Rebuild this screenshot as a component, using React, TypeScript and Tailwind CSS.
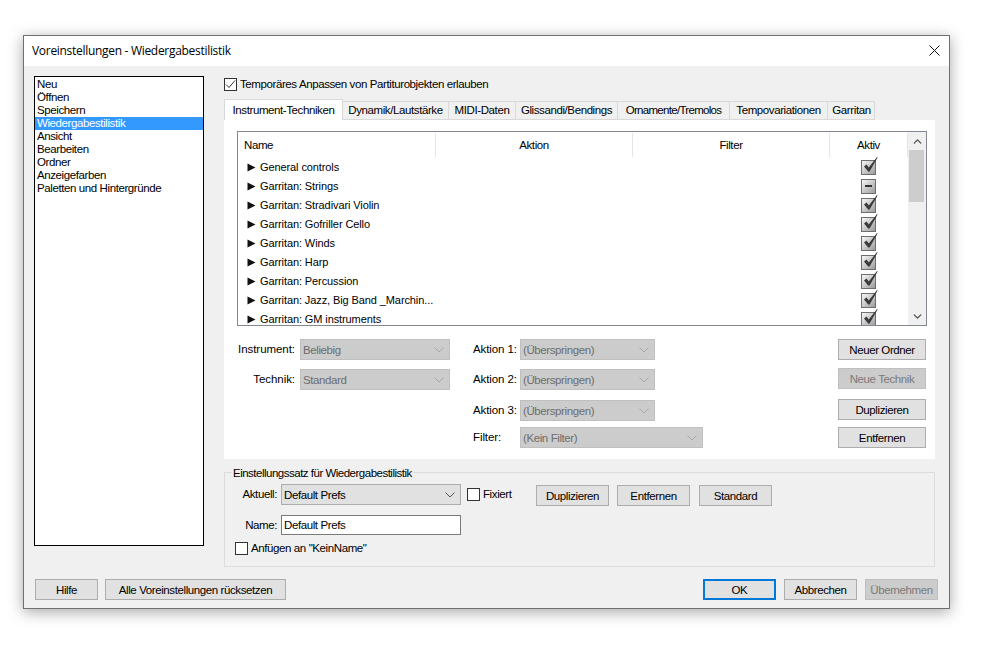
import { ChevronDown, ChevronUp } from 'lucide-react';

const menuItems = ['Neu', 'Öffnen', 'Speichern', 'Wiedergabestilistik', 'Ansicht', 'Bearbeiten', 'Ordner', 'Anzeigefarben', 'Paletten und Hintergründe'];

const tabs = [
  { label: 'Dynamik/Lautstärke', width: 'w-[106px]' },
  { label: 'MIDI-Daten', width: 'w-[67px]' },
  { label: 'Glissandi/Bendings', width: 'w-[102px]' },
  { label: 'Ornamente/Tremolos', width: 'w-[112px] tracking-[-0.7px]' },
  { label: 'Tempovariationen', width: 'w-[98px]' },
  { label: 'Garritan', width: 'w-[47px] pl-[1px]' },
];

const rows = [
  { name: 'General controls', state: 'on' },
  { name: 'Garritan: Strings', state: 'mixed' },
  { name: 'Garritan: Stradivari Violin', state: 'on' },
  { name: 'Garritan: Gofriller Cello', state: 'on' },
  { name: 'Garritan: Winds', state: 'on' },
  { name: 'Garritan: Harp', state: 'on' },
  { name: 'Garritan: Percussion', state: 'on' },
  { name: 'Garritan: Jazz, Big Band _Marchin...', state: 'on' },
  { name: 'Garritan: GM instruments', state: 'on' },
];

function Button({ label, width = 'w-[88px]', disabled, primary }: { label: string; width?: string; disabled?: boolean; primary?: boolean }) {
  const tone = disabled
    ? 'bg-[#cccccc] border-[#bfbfbf] text-[#7a7a7a]'
    : primary
      ? 'bg-[#e1e1e1] border-2 border-[#0078d7] text-black'
      : 'bg-[#e1e1e1] border-[#adadad] text-black';
  return <div className={`h-[21px] shrink-0 border pt-[1px] flex items-center justify-center ${width} ${tone}`}>{label}</div>;
}

function Select({ value, width, disabled }: { value: string; width: string; disabled?: boolean }) {
  const tone = disabled ? 'bg-[#cccccc] border-[#bfbfbf] text-[#6d6d6d]' : 'bg-[#e1e1e1] border-[#adadad] text-black';
  return (
    <div className={`h-[21px] shrink-0 border pt-[1px] flex items-center justify-between pl-[2px] pr-[5px] ${width} ${tone}`}>
      <span>{value}</span>
      <svg width="10" height="6" viewBox="0 0 10 6" fill="none" stroke={disabled ? '#a8a8a8' : '#555555'}>
        <path d="M0.5 0.5 L5 5 L9.5 0.5" />
      </svg>
    </div>
  );
}

function Checkbox({ checked }: { checked?: boolean }) {
  return (
    <div className="w-[13px] h-[13px] shrink-0 border border-[#333333] bg-white flex items-center justify-center">
      {checked && (
        <svg width="11" height="11" viewBox="0 0 11 11" fill="none" stroke="#333333">
          <path d="M1 5.5 L4 8.5 L10 1.5" />
        </svg>
      )}
    </div>
  );
}

function ActiveMark({ state }: { state: string }) {
  return (
    <div className="relative w-[15px] h-[15px] border border-[#6e6e6e] bg-gradient-to-br from-[#f8f8f8] to-[#9c9c9c]">
      {state === 'on' ? (
        <svg className="absolute left-[0px] top-[-5px]" width="18" height="18" viewBox="0 0 18 18" fill="none">
          <path d="M2 10.5 L4.5 8.5 L6.8 11.5 L15 1 L15.6 1.4 L7.6 15.5 L6.2 15.5 Z" fill="#3a3a3a" />
        </svg>
      ) : (
        <div className="absolute left-[3px] top-[5px] w-[7px] h-[2px] bg-[#333333]" />
      )}
    </div>
  );
}

function HeaderCell({ label, width, align = 'center' }: { label: string; width: string; align?: string }) {
  return (
    <div className={`h-[24px] shrink-0 border-r border-[#e5e5e5] flex items-center ${width} ${align === 'left' ? 'pl-[6px]' : 'justify-center'}`}>
      {label}
    </div>
  );
}

export default function App() {
  return (
    <div className="min-h-screen bg-white pt-[35px] pl-[23px] text-[11.5px] leading-[13px] text-black tracking-[-0.4px] font-['Liberation_Sans',Arial,sans-serif]">
      <div className="w-[927px] h-[574px] border border-[#6f6f6f] bg-[#f0f0f0] shadow-[0_3px_14px_rgba(0,0,0,0.35)]">
        <div className="h-[30px] bg-white flex items-center justify-between pl-[8px] pr-[9px] pb-[1px]">
          <span className="text-[12px] tracking-[-0.3px] font-['Open_Sans',sans-serif]">Voreinstellungen - Wiedergabestilistik</span>
          <svg width="11" height="11" viewBox="0 0 11 11" stroke="#111111" fill="none">
            <path d="M0.5 0.5 L10.5 10.5 M10.5 0.5 L0.5 10.5" />
          </svg>
        </div>

        <div className="flex pl-[10px] pt-[10px]">
          <div className="w-[170px] h-[470px] border border-black bg-white pt-[1px] shrink-0">
            {menuItems.map((item) => (
              <div
                key={item}
                className={`h-[13px] pl-[2px] ${item === 'Wiedergabestilistik' ? 'bg-[#3399ff] text-white' : ''}`}
              >
                {item}
              </div>
            ))}
          </div>

          <div className="ml-[20px] w-[711px]">
            <div className="flex items-center gap-[3px] h-[14px] mt-[1px]">
              <Checkbox checked />
              <span>Temporäres Anpassen von Partiturobjekten erlauben</span>
            </div>

            <div className="flex items-end h-[21px] mt-[8px]">
              <div className="w-[119px] h-[21px] bg-white border border-b-0 border-[#d9d9d9] flex items-center justify-center">
                Instrument-Techniken
              </div>
              {tabs.map((tab) => (
                <div
                  key={tab.label}
                  className={`h-[19px] bg-[#f0f0f0] border border-l-0 border-[#d9d9d9] flex items-center justify-center ${tab.width}`}
                >
                  {tab.label}
                </div>
              ))}
            </div>

            <div className="h-[339px] bg-white pl-[13px] pt-[11px]">
              <div className="w-[690px] h-[195px] border border-[#828790] flex overflow-hidden">
                <div className="w-[670px] shrink-0">
                  <div className="flex pt-[1px]">
                    <HeaderCell label="Name" width="w-[198px]" align="left" />
                    <HeaderCell label="Aktion" width="w-[197px]" />
                    <HeaderCell label="Filter" width="w-[197px]" />
                    <HeaderCell label="Aktiv" width="w-[78px]" />
                  </div>
                  <div className="mt-[1px]">
                    {rows.map((row) => (
                      <div key={row.name} className="flex items-center h-[19px] tracking-[-0.1px] text-[11px]">
                        <div className="w-[591px] shrink-0 pl-[9px] flex items-center gap-[4px]">
                          <svg width="9" height="9" viewBox="0 0 9 9">
                            <path d="M0.5 0.5 L8.5 4.5 L0.5 8.5 Z" fill="#111111" />
                          </svg>
                          <span>{row.name}</span>
                        </div>
                        <div className="w-[79px] flex justify-center pr-[1px]">
                          <ActiveMark state={row.state} />
                        </div>
                      </div>
                    ))}
                  </div>
                </div>
                <div className="w-[18px] bg-[#f0f0f0] flex flex-col">
                  <div className="h-[18px] flex items-center justify-center">
                    <ChevronUp size={13} strokeWidth={2.5} color="#505050" />
                  </div>
                  <div className="ml-[1px] w-[15px] h-[52px] bg-[#cdcdcd]" />
                  <div className="flex-1" />
                  <div className="h-[17px] flex items-center justify-center">
                    <ChevronDown size={13} strokeWidth={2.5} color="#505050" />
                  </div>
                </div>
              </div>

              <div className="flex mt-[13px]">
                <div className="w-[213px] shrink-0 tracking-[-0.05px]">
                  <div className="flex items-center justify-end gap-[5px] h-[21px] mb-[9px]">
                    <span>Instrument:</span>
                    <Select value="Beliebig" width="w-[150px] tracking-[-0.4px]" disabled />
                  </div>
                  <div className="flex items-center justify-end gap-[5px] h-[21px]">
                    <span>Technik:</span>
                    <Select value="Standard" width="w-[150px] tracking-[-0.4px]" disabled />
                  </div>
                </div>
                <div className="w-[388px] shrink-0 pl-[23px]">
                  <div className="flex items-center gap-[5px] h-[21px] mb-[9px]">
                    <span className="w-[42px] whitespace-nowrap tracking-[-0.1px]">Aktion 1:</span>
                    <Select value="(Überspringen)" width="w-[135px]" disabled />
                  </div>
                  <div className="flex items-center gap-[5px] h-[21px] mb-[10px]">
                    <span className="w-[42px] whitespace-nowrap tracking-[-0.1px]">Aktion 2:</span>
                    <Select value="(Überspringen)" width="w-[135px]" disabled />
                  </div>
                  <div className="flex items-center gap-[5px] h-[21px] mb-[6px]">
                    <span className="w-[42px] whitespace-nowrap tracking-[-0.1px]">Aktion 3:</span>
                    <Select value="(Überspringen)" width="w-[135px]" disabled />
                  </div>
                  <div className="flex items-center gap-[5px] h-[21px]">
                    <span className="w-[42px] whitespace-nowrap tracking-[-0.1px]">Filter:</span>
                    <Select value="(Kein Filter)" width="w-[183px]" disabled />
                  </div>
                </div>
                <div className="flex flex-col">
                  <Button label="Neuer Ordner" />
                  <div className="mt-[8px]">
                    <Button label="Neue Technik" disabled />
                  </div>
                  <div className="mt-[10px]">
                    <Button label="Duplizieren" />
                  </div>
                  <div className="mt-[7px]">
                    <Button label="Entfernen" />
                  </div>
                </div>
              </div>
            </div>

            <div className="relative mt-[13px] w-[711px] h-[95px] border border-[#dcdcdc] pl-[10px] pt-[11px]">
              <span className="absolute left-[7px] top-[-6px] bg-[#f0f0f0] px-[1px] tracking-[-0.5px]">Einstellungssatz für Wiedergabestilistik</span>
              <div className="flex items-center h-[21px]">
                <span className="w-[42px] text-right mr-[4px]">Aktuell:</span>
                <Select value="Default Prefs" width="w-[180px]" />
                <div className="ml-[6px]">
                  <Checkbox />
                </div>
                <span className="ml-[3px] w-[26px]">Fixiert</span>
                <div className="flex ml-[27px] mt-[2px]">
                  <Button label="Duplizieren" width="w-[73px]" />
                  <div className="ml-[8px]">
                    <Button label="Entfernen" width="w-[73px]" />
                  </div>
                  <div className="ml-[9px]">
                    <Button label="Standard" width="w-[73px]" />
                  </div>
                </div>
              </div>
              <div className="flex items-center h-[20px] mt-[10px]">
                <span className="w-[42px] text-right mr-[4px]">Name:</span>
                <div className="w-[180px] h-[20px] border border-[#7a7a7a] bg-white flex items-center pl-[2px]">Default Prefs</div>
              </div>
              <div className="flex items-center gap-[3px] mt-[7px]">
                <Checkbox />
                <span>Anfügen an "KeinName"</span>
              </div>
            </div>
          </div>
        </div>

        <div className="flex justify-between pl-[11px] pr-[11px] mt-[12px]">
          <div className="flex gap-[7px]">
            <Button label="Hilfe" width="w-[63px]" />
            <Button label="Alle Voreinstellungen rücksetzen" width="w-[181px]" />
          </div>
          <div className="flex gap-[8px]">
            <Button label="OK" width="w-[73px]" primary />
            <Button label="Abbrechen" width="w-[73px]" />
            <Button label="Übernehmen" width="w-[73px]" disabled />
          </div>
        </div>
      </div>
    </div>
  );
}
